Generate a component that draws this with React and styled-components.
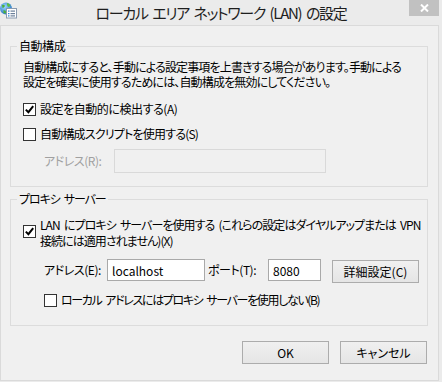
import React from "react";
import styled, { createGlobalStyle } from "styled-components";

const GlobalStyle = createGlobalStyle`
  html, body { margin: 0; padding: 0; background: #ebebeb; }
  body {
    font-family: "Noto Sans CJK JP", "Noto Sans", sans-serif;
    font-size: 12px;
    letter-spacing: -0.45px;
    color: #000;
    font-feature-settings: "palt";
  }
`;

const Window = styled.div`
  width: 442px;
  height: 382px;
  display: flex;
  flex-direction: column;
  background: #ebebeb;
  overflow: hidden;
`;

const TitleBar = styled.div`
  height: 25px;
  flex: none;
  display: grid;
  grid-template-columns: 1fr auto 1fr;
  align-items: start;
`;

const IconWrap = styled.div`
  justify-self: start;
  padding-top: 1px;
  height: 18px;
`;

const Title = styled.div`
  line-height: 25px;
  font-size: 15px;
  letter-spacing: -1.3px;
  word-spacing: 2.5px;
  color: #1e1e1e;
  white-space: nowrap;
`;

const Close = styled.div`
  justify-self: end;
  width: 30px;
  height: 16px;
  margin-right: 3px;
  background: #c1c1c1;
  display: flex;
  align-items: center;
  justify-content: center;
`;

const Client = styled.div`
  flex: 1;
  margin: 0 3px 1px 0;
  border: 1px solid #dadada;
  background: #f0f0f0;
  padding: 12px 10px 16px 9px;
  display: flex;
  flex-direction: column;
  min-height: 0;
`;

const Group = styled.fieldset`
  margin: ${(p) => p.$mt}px 0 0 0;
  border: 1px solid #dcdcdc;
  padding: ${(p) => p.$pt}px 10px ${(p) => p.$pb}px 12px;
  min-width: 0;
  display: flex;
  flex-direction: column;
`;

const Legend = styled.legend`
  padding: 0 2px;
  margin-left: -6px;
  line-height: 16px;
  font-size: 12px;
  letter-spacing: ${(p) => p.$ls ?? -0.45}px;
  word-spacing: ${(p) => p.$ws ?? 0}px;
  white-space: nowrap;
`;

const Para = styled.p`
  margin: 0;
  line-height: 15px;
  letter-spacing: -0.85px;
  white-space: nowrap;
`;

const Text = styled.span`
  letter-spacing: ${(p) => p.$ls ?? -0.45}px;
  word-spacing: ${(p) => p.$ws ?? 0}px;
`;

const CheckRow = styled.div`
  display: flex;
  align-items: ${(p) => (p.$top ? "flex-start" : "center")};
  gap: 4px;
  line-height: 16px;
  white-space: nowrap;
  margin-top: ${(p) => p.$mt}px;
  margin-left: ${(p) => p.$indent || 0}px;
`;

const Box = styled.span`
  width: 13px;
  height: 13px;
  box-sizing: border-box;
  border: 1px solid #333;
  background: #fff;
  flex: none;
  display: flex;
  align-items: center;
  justify-content: center;
  margin-top: ${(p) => p.$mt || 0}px;
`;

const FieldRow = styled.div`
  display: flex;
  align-items: flex-start;
  margin-top: ${(p) => p.$mt}px;
  margin-left: 21px;
`;

const FieldLabel = styled.span`
  width: ${(p) => p.$w}px;
  flex: none;
  line-height: ${(p) => p.$h}px;
  color: ${(p) => (p.$disabled ? "#a0a0a0" : "#000")};
  white-space: nowrap;
`;

const TextInput = styled.input`
  width: ${(p) => p.$w}px;
  height: ${(p) => p.$h}px;
  box-sizing: border-box;
  border: 1px solid ${(p) => (p.disabled ? "#d9d9d9" : "#a9a9a9")};
  background: ${(p) => (p.disabled ? "#f0f0f0" : "#fff")};
  padding: 0 4px;
  margin: 0 ${(p) => p.$mr || 0}px 0 0;
  font: inherit;
  font-size: 12px;
  letter-spacing: 0;
  color: #000;
  outline: none;
  flex: none;
`;

const Button = styled.button`
  width: 87px;
  height: 23px;
  box-sizing: border-box;
  border: 1px solid #acacac;
  border-radius: 0;
  background: linear-gradient(#f0f0f0, #e5e5e5);
  font: inherit;
  font-size: 12px;
  color: #000;
  padding: 0;
  flex: none;
  white-space: nowrap;
  margin-top: ${(p) => p.$mt || 0}px;
`;

const ButtonRow = styled.div`
  display: flex;
  justify-content: flex-end;
  gap: 11px;
  margin: 15px 1px 0 0;
`;

const Check = () => (
  <svg width="9" height="9" viewBox="0 0 9 9">
    <path d="M0.8 4.6 L3.4 7.2 L8.2 1.2" stroke="#000" strokeWidth="2" fill="none" />
  </svg>
);

const CheckBox = ({ checked, mt }) => <Box $mt={mt}>{checked && <Check />}</Box>;

const AppIcon = () => (
  <svg width="17" height="18" viewBox="0 0 17 18">
    <defs>
      <radialGradient id="g" cx="0.4" cy="0.35" r="0.7">
        <stop offset="0" stopColor="#9fd8ff" />
        <stop offset="1" stopColor="#1f6fc4" />
      </radialGradient>
    </defs>
    <circle cx="6" cy="7.5" r="6" fill="url(#g)" />
    <path d="M2 4 Q4 3 5 5 Q4 7 2.5 7 Z" fill="#4caf3a" />
    <path d="M7 2 Q10 2.5 10.5 5 L8 6 Q6.5 4 7 2 Z" fill="#5cbf40" />
    <path d="M3.5 9 Q6 9 6.5 11.5 Q5 13 3.5 12 Z" fill="#4caf3a" />
    <rect x="6.5" y="7.5" width="10" height="9.5" fill="#fff" stroke="#8a9bb0" />
    <rect x="8" y="9.5" width="1.5" height="1.2" fill="#2d7fd0" />
    <rect x="10.5" y="9.5" width="4.5" height="1.2" fill="#6a7f99" />
    <rect x="8" y="12" width="1.5" height="1.2" fill="#2d7fd0" />
    <rect x="10.5" y="12" width="4.5" height="1.2" fill="#6a7f99" />
    <rect x="8" y="14.3" width="1.5" height="1.2" fill="#2d7fd0" />
    <rect x="10.5" y="14.3" width="4.5" height="1.2" fill="#6a7f99" />
  </svg>
);

const CloseGlyph = () => (
  <svg width="9" height="8" viewBox="0 0 9 8">
    <path d="M1 0.5 L8 7.5 M8 0.5 L1 7.5" stroke="#fff" strokeWidth="2" />
  </svg>
);

export default function App() {
  return (
    <>
      <GlobalStyle />
      <Window>
        <TitleBar>
          <IconWrap>
            <AppIcon />
          </IconWrap>
          <Title>ローカル エリア ネットワーク (LAN) の設定</Title>
          <Close>
            <CloseGlyph />
          </Close>
        </TitleBar>
        <Client>
          <Group $mt={0} $pt={5} $pb={13}>
            <Legend>自動構成</Legend>
            <Para>
              自動構成にすると、手動による設定事項を上書きする場合があります。手動による
              <br />
              設定を確実に使用するためには、自動構成を無効にしてください。
            </Para>
            <CheckRow $mt={12}>
              <CheckBox checked />
              <Text>設定を自動的に検出する(A)</Text>
            </CheckRow>
            <CheckRow $mt={9}>
              <CheckBox />
              <Text $ls={-0.8}>自動構成スクリプトを使用する(S)</Text>
            </CheckRow>
            <FieldRow $mt={7}>
              <FieldLabel $w={70} $h={24} $disabled>
                アドレス(R):
              </FieldLabel>
              <TextInput $w={212} $h={24} disabled defaultValue="" />
            </FieldRow>
          </Group>
          <Group $mt={4} $pt={10} $pb={17}>
            <Legend $ls={-1.1} $ws={2.5}>
              プロキシ サーバー
            </Legend>
            <CheckRow $top $mt={0}>
              <CheckBox checked mt={8} />
              <Text $ls={-0.95} $ws={2.5}>
                LAN にプロキシ サーバーを使用する (これらの設定はダイヤルアップまたは VPN
                <br />
                接続には適用されません)(X)
              </Text>
            </CheckRow>
            <FieldRow $mt={10}>
              <FieldLabel $w={63} $h={22}>
                アドレス(E):
              </FieldLabel>
              <TextInput $w={98} $h={22} $mr={3} readOnly defaultValue="localhost" />
              <FieldLabel $w={60} $h={22}>
                ポート(T):
              </FieldLabel>
              <TextInput $w={53} $h={22} $mr={11} readOnly defaultValue="8080" />
              <Button $mt={1}>詳細設定(C)</Button>
            </FieldRow>
            <CheckRow $mt={9} $indent={21}>
              <CheckBox />
              <Text $ls={-1.35} $ws={2.5}>
                ローカル アドレスにはプロキシ サーバーを使用しない(B)
              </Text>
            </CheckRow>
          </Group>
          <ButtonRow>
            <Button>OK</Button>
            <Button>キャンセル</Button>
          </ButtonRow>
        </Client>
      </Window>
    </>
  );
}
